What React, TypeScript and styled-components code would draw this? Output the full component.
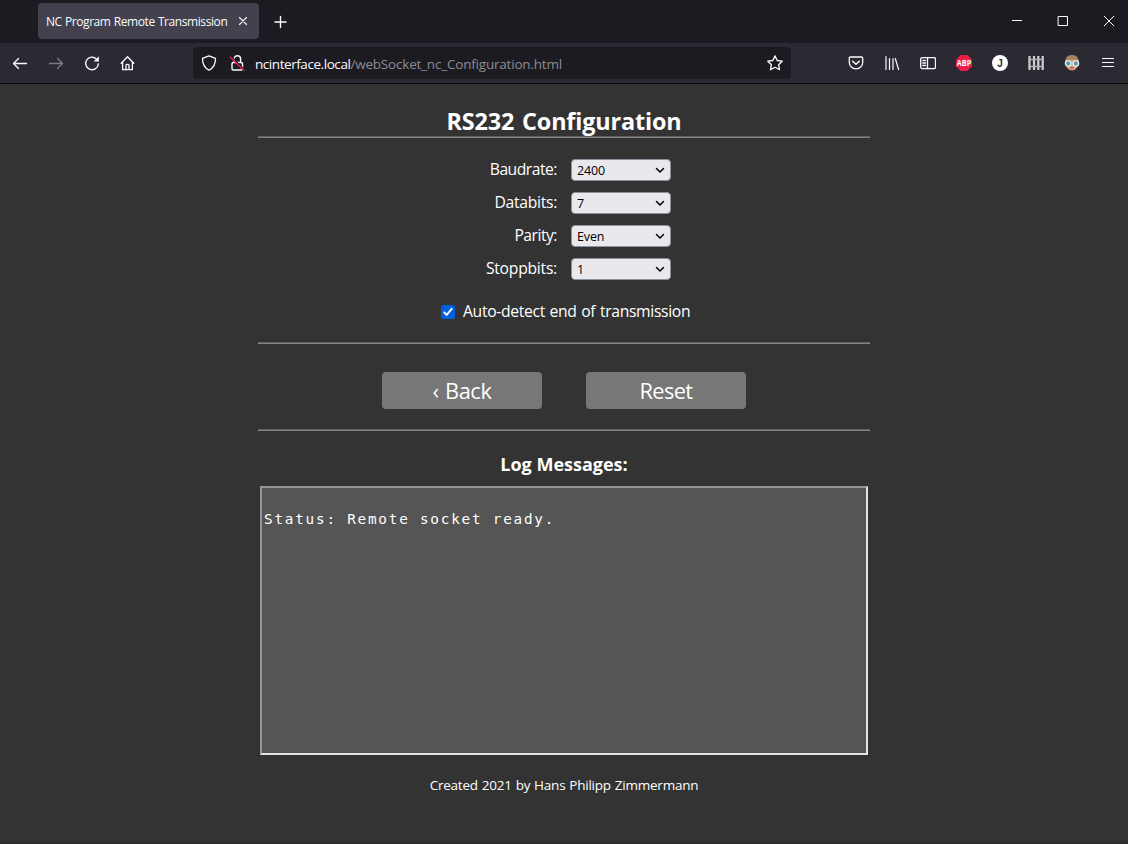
import React from "react";
import styled, { createGlobalStyle } from "styled-components";

const GlobalStyle = createGlobalStyle`
  * { box-sizing: border-box; }
  body { margin: 0; background: #333333; font-family: "Open Sans", "Noto Sans", sans-serif; color: #fff; }
`;

const Window = styled.div`
  width: 1128px;
  height: 844px;
  display: flex;
  flex-direction: column;
  overflow: hidden;
  background: #333333;
`;

const TabBar = styled.header`
  height: 43px;
  flex: none;
  display: flex;
  align-items: flex-start;
  padding: 3px 0 0 38px;
  background: #1c1b22;
`;

const Tab = styled.div`
  width: 221px;
  height: 36px;
  display: flex;
  align-items: center;
  padding-left: 8px;
  border-radius: 4px;
  background: #42414d;
`;

const Label = styled.span<{ $size: number; $spacing?: number; $word?: number; $color?: string; $line?: number }>`
  font-family: "Open Sans", "Noto Sans", sans-serif;
  font-size: ${(p) => p.$size}px;
  letter-spacing: ${(p) => p.$spacing ?? 0}px;
  word-spacing: ${(p) => p.$word ?? 0}px;
  color: ${(p) => p.$color ?? "#fbfbfe"};
  line-height: ${(p) => p.$line ?? 20}px;
  white-space: nowrap;
`;

const TabTitle = styled(Label)`
  width: 188px;
  padding-top: 2px;
`;

const Icon = styled.svg`
  display: block;
  flex: none;
  fill: none;
  stroke: #fbfbfe;
  stroke-width: 1.3;
  stroke-linecap: round;
  stroke-linejoin: round;
`;

const NewTab = styled.div`
  padding: 11px 0 0 13px;
`;

const WindowControls = styled.div`
  display: flex;
  gap: 30px;
  margin: 10px 11px 0 auto;
`;

const NavBar = styled.nav`
  height: 41px;
  flex: none;
  display: flex;
  align-items: center;
  padding: 0 12px;
  background: #2b2a33;
  border-bottom: 1px solid #0c0c0d;
`;

const NavButtons = styled.div`
  display: flex;
  gap: 20px;
  width: 181px;
`;

const AddressBar = styled.div`
  width: 598px;
  height: 32px;
  display: flex;
  align-items: center;
  padding: 0 8px;
  border-radius: 4px;
  background: #1c1b22;
`;

const Security = styled.div`
  display: flex;
  gap: 12px;
  width: 54px;
`;

const Url = styled.div`
  flex: 1;
  display: flex;
  padding-top: 2px;
`;

const Extensions = styled.div`
  display: flex;
  gap: 20px;
  margin-left: auto;
`;

const Page = styled.main`
  width: 612px;
  flex: 1;
  margin: 0 auto;
  display: flex;
  flex-direction: column;
  align-items: center;
`;

const Heading = styled.h1`
  margin: 21px 0 0;
  height: 31px;
  font-size: 23.4px;
  line-height: 32px;
  letter-spacing: -0.16px;
  word-spacing: 2px;
  font-weight: 700;
`;

const Rule = styled.hr`
  width: 100%;
  height: 2px;
  flex: none;
  margin: 0;
  border: 0;
  border-top: 1px solid #606060;
  border-bottom: 1px solid #858585;
`;

const Settings = styled.form`
  display: grid;
  grid-template-columns: 299px 100px;
  column-gap: 14px;
  row-gap: 11px;
  width: 100%;
  margin-top: 21px;
`;

const FieldName = styled(Label)`
  text-align: right;
`;

const SelectBox = styled.div`
  display: grid;
  height: 22px;
  align-items: center;
  & > * { grid-area: 1 / 1; }
  & > svg { justify-self: end; margin-right: 6px; pointer-events: none; }
`;

const Select = styled.select`
  appearance: none;
  width: 100%;
  height: 22px;
  padding: 1px 5px 0;
  border: 1px solid #8f8f9d;
  border-radius: 4px;
  background: #e9e9ed;
  color: #000;
  font: 12.5px/18px "Open Sans", "Noto Sans", sans-serif;
  letter-spacing: -0.15px;
`;

const CheckRow = styled.label`
  display: flex;
  align-items: center;
  width: 100%;
  height: 22px;
  gap: 8px;
  margin: 20px 0 20px;
  padding-left: 183px;
`;

const CheckBox = styled.span`
  width: 14px;
  height: 14px;
  margin-top: 2px;
  border-radius: 2px;
  background: #0060df;
`;

const Buttons = styled.div`
  display: flex;
  gap: 44px;
  margin: 28px 0 20px;
`;

const Button = styled.button`
  width: 160px;
  height: 37px;
  padding: 0;
  border: 0;
  border-radius: 4px;
  background: #777777;
`;

const LogTitle = styled.h2`
  margin: 21px 0 9px;
  height: 25px;
  font-size: 18px;
  line-height: 25px;
  font-weight: 700;
`;

const Log = styled.pre`
  width: 608px;
  height: 269px;
  margin: 0;
  padding: 22px 2px;
  border: 2px solid;
  border-color: #959595 #e3e3e3 #e3e3e3 #959595;
  background: #555555;
  font: 14.3px/18px "DejaVu Sans Mono", monospace;
  letter-spacing: 1.79px;
`;

const Credit = styled.footer`
  margin-top: 18px;
`;

const BottomEdge = styled.div`
  height: 2px;
  flex: none;
  background: #2b2a2d;
`;

const fields = [
  { name: "Baudrate:", value: "2400", spacing: -0.5 },
  { name: "Databits:", value: "7", spacing: -0.3 },
  { name: "Parity:", value: "Even", spacing: -0.5 },
  { name: "Stoppbits:", value: "1", spacing: -0.25 },
];

const Svg = ({ children, ...rest }: React.SVGProps<SVGSVGElement>) => (
  <Icon width="16" height="16" viewBox="0 0 16 16" {...(rest as object)}>{children}</Icon>
);

export default function App() {
  return (
    <>
      <GlobalStyle />
      <Window>
        <TabBar>
          <Tab>
            <TabTitle $size={12} $spacing={-0.42} $word={0.5}>NC Program Remote Transmission</TabTitle>
            <Svg><path d="M5.5 4.5l7 7M12.5 4.5l-7 7" strokeWidth="1.1" /></Svg>
          </Tab>
          <NewTab><Svg><path d="M8.5 2.5v11M3 8h11" strokeWidth="1.4" /></Svg></NewTab>
          <WindowControls>
            <Svg><path d="M3 7.5h10" strokeWidth="1" strokeLinecap="butt" /></Svg>
            <Svg><path d="M3.5 3.5h9v9h-9z" strokeWidth="1" strokeLinejoin="miter" /></Svg>
            <Svg><path d="M3 3l10 10M13 3L3 13" strokeWidth="1" strokeLinecap="butt" /></Svg>
          </WindowControls>
        </TabBar>

        <NavBar>
          <NavButtons>
            <Svg><path d="M14.5 8.5H1.7M6.5 3.5l-5 5 5 5" /></Svg>
            <Svg opacity=".4"><path d="M1.5 8.5h12.8M9.5 3.5l5 5-5 5" /></Svg>
            <Svg>
              <path d="M13.6 5.5A6.3 6.3 0 1 0 14.3 9" strokeWidth="1.4" />
              <path d="M14.9 1.3v5.2H9.7z" fill="#fbfbfe" stroke="none" />
            </Svg>
            <Svg>
              <path d="M1.2 8.2L7.5 1.7 13.8 8.2M2.6 7.2v7.5h9.8V7.2M6 14.5v-4.2q0-1 1-1h1q1 0 1 1v4.2" />
            </Svg>
          </NavButtons>
          <AddressBar>
            <Security>
              <Svg><path d="M8 .8l6.5 2.6c.2 5.3-1.6 9-6.5 11.800C3.100 12.400 1.300 8.700 1.500 3.400z" /></Svg>
              <Svg>
                <rect x="3" y="7.5" width="10.5" height="7.5" rx="1.3" strokeWidth="1.4" />
                <path d="M5 7V4a3.3 3.3 0 0 1 6.6 0v3" strokeWidth="1.4" />
                <path d="M2.5 1.8l12.5 12.300" stroke="#1c1b22" strokeWidth="1.2" />
                <path d="M1.3 2.3l13.400 13" stroke="#e2214b" strokeWidth="1.4" />
              </Svg>
            </Security>
            <Url>
              <Label $size={13.5} $spacing={-0.44}>ncinterface.local</Label>
              <Label $size={13.5} $spacing={-0.2} $color="#8c8c91">/webSocket_nc_Configuration.html</Label>
            </Url>
            <Svg><path d="M8 .9l2.200 4.600 5 .7-3.600 3.500.9 5L8 12.300l-4.500 2.400.9-5L.8 6.200l5-.7z" /></Svg>
          </AddressBar>
          <Extensions>
            <Svg>
              <path d="M2.5 2h11q1.200 0 1.200 1.200V7.500a6.700 6.300 0 0 1-13.400 0V3.200Q1.300 2 2.500 2z" />
              <path d="M4.700 6.200L8 9.300l3.300-3.100" strokeWidth="1.5" />
            </Svg>
            <Svg><path d="M2 1.500v13M5.500 3.500v11M9 3.500v11M11.300 3.500l3.300 11" strokeWidth="1.2" /></Svg>
            <Svg>
              <rect x=".7" y="2.6" width="14.8" height="11" rx="1.5" />
              <path d="M7.500 2.600v11M2.800 5.500h2.700M2.800 8h2.700M2.800 10.500h2.700" />
            </Svg>
            <Svg>
              <path d="M4.700 0h6.600L16 4.700v6.600L11.300 16H4.700L0 11.300V4.700z" fill="#ed1e45" stroke="none" />
              <text x="8" y="11" textAnchor="middle" fontSize="8.3" fontWeight="700" fill="#fff" stroke="none" textLength="14.4" lengthAdjust="spacingAndGlyphs">ABP</text>
            </Svg>
            <Svg>
              <circle cx="8" cy="8" r="8" fill="#fff" stroke="none" />
              <text x="8" y="11.7" textAnchor="middle" fontSize="10" fontWeight="700" fontFamily="Liberation Sans" fill="#2b2a33" stroke="none">J</text>
            </Svg>
            <Svg>
              <path d="M1.500 1v14M6 1v14M10.300 1v14M14.700 1v14" stroke="#d0d0d2" strokeWidth="2.2" strokeLinecap="butt" />
              <path d="M0 4.500h16M0 11.500h16" stroke="#b4b4b8" strokeWidth="1.3" strokeLinecap="butt" />
            </Svg>
            <Svg>
              <path d="M1.500 8C1 3 4 .3 8 .3s7 2.700 6.500 7.700c-.3 4-3 7.500-6.500 7.500s-6.200-3.500-6.500-7.500z" fill="#d99d76" stroke="none" />
              <path d="M1.300 6.500C1.300 2.200 4 .2 8 .2s6.700 2 6.700 6.300L11 4.500 5 5z" fill="#a4835c" stroke="none" />
              <circle cx="4.200" cy="8.500" r="2.800" fill="#5a9db0" stroke="#e4edf0" />
              <circle cx="11.800" cy="8.500" r="2.800" fill="#5a9db0" stroke="#e4edf0" />
              <path d="M6.500 12.800q1.500.8 3 0" stroke="#a34f43" strokeWidth="1" />
            </Svg>
            <Svg><path d="M2.500 3.500h11M2.500 7.500h11M2.500 11.500h11" strokeWidth="1.2" /></Svg>
          </Extensions>
        </NavBar>

        <Page>
          <Heading>RS232 Configuration</Heading>
          <Rule />
          <Settings>
            {fields.map((f) => (
              <React.Fragment key={f.name}>
                <FieldName $size={15.7} $spacing={f.spacing} $color="#fff" $line={21}>{f.name}</FieldName>
                <SelectBox>
                  <Select defaultValue={f.value}><option>{f.value}</option></Select>
                  <Icon width="10" height="8" viewBox="0 0 10 8"><path d="M1.500 2.500L5 6l3.500-3.500" stroke="#000" strokeWidth="1.5" /></Icon>
                </SelectBox>
              </React.Fragment>
            ))}
          </Settings>
          <CheckRow>
            <CheckBox>
              <Icon width="14" height="14" viewBox="0 0 14 14"><path d="M3.300 7.500l2.400 2.400 5-6" strokeWidth="2" /></Icon>
            </CheckBox>
            <Label $size={15.7} $spacing={-0.33} $word={0.9} $color="#fff">Auto-detect end of transmission</Label>
          </CheckRow>
          <Rule />
          <Buttons>
            <Button><Label $size={21.8} $spacing={-0.4} $word={1} $color="#fff" $line={36}>‹ Back</Label></Button>
            <Button><Label $size={21.8} $spacing={-0.6} $color="#fff" $line={36}>Reset</Label></Button>
          </Buttons>
          <Rule />
          <LogTitle>Log Messages:</LogTitle>
          <Log>Status: Remote socket ready.</Log>
          <Credit><Label $size={13.5} $spacing={-0.22} $word={0.6} $color="#fff">Created 2021 by Hans Philipp Zimmermann</Label></Credit>
        </Page>
        <BottomEdge />
      </Window>
    </>
  );
}
